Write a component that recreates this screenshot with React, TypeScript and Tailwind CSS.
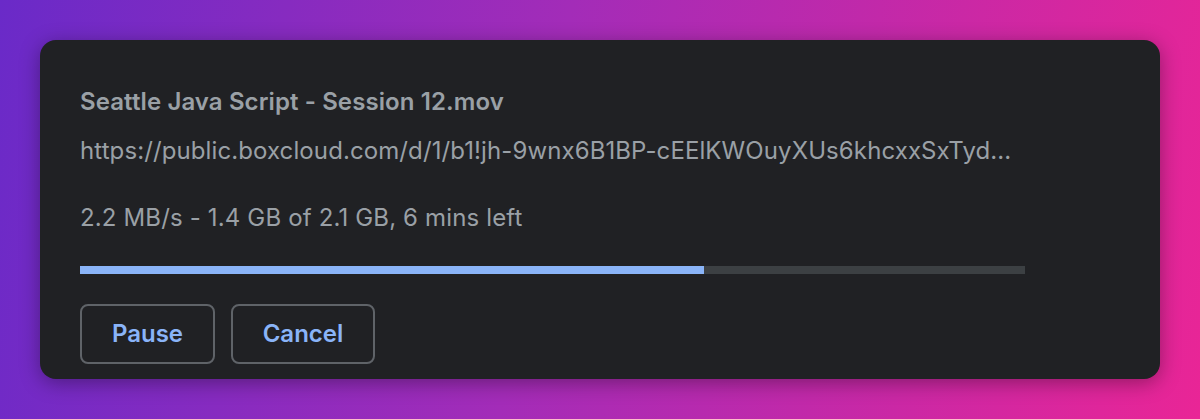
export default function App() {
  return (
    <div className="w-[1200px] h-[419px] overflow-hidden bg-[linear-gradient(100deg,#6a2ac8_0%,#a32cb8_45%,#e92596_100%)] pt-[40px] px-[40px]" style={{ fontFamily: 'Inter, "Liberation Sans", Arial, sans-serif' }}>
      <div className="h-[339px] rounded-[16px] bg-[#202124] shadow-[0_4px_20px_rgba(0,0,0,0.35)] pl-[40px] pr-[40px] pt-[47px] flex flex-col">
        <div className="text-[24px] leading-[29px] tracking-[0.1px] font-semibold text-[#9aa0a6]">Seattle Java Script - Session 12.mov</div>
        <div className="mt-[20px] text-[24px] leading-[29px] tracking-[0.1px] text-[#9aa0a6] whitespace-nowrap">https://public.boxcloud.com/d/1/b1!jh-9wnx6B1BP-cEElKWOuyXUs6khcxxSxTyd...</div>
        <div className="mt-[38px] text-[24px] leading-[29px] tracking-[0.15px] text-[#9aa0a6]">2.2 MB/s - 1.4 GB of 2.1 GB, 6 mins left</div>
        <div className="mt-[34px] w-[945px] h-[8px] bg-[#3c4043]">
          <div className="h-full bg-[#8ab4f8]" style={{ width: '66%' }} />
        </div>
        <div className="mt-[30px] flex gap-[16px]">
          <button className="w-[135px] h-[60px] rounded-[8px] border-2 border-[#5f6368] text-[24px] font-semibold text-[#8ab4f8]">Pause</button>
          <button className="w-[144px] h-[60px] rounded-[8px] border-2 border-[#5f6368] text-[24px] font-semibold text-[#8ab4f8]">Cancel</button>
        </div>
      </div>
    </div>
  );
}
